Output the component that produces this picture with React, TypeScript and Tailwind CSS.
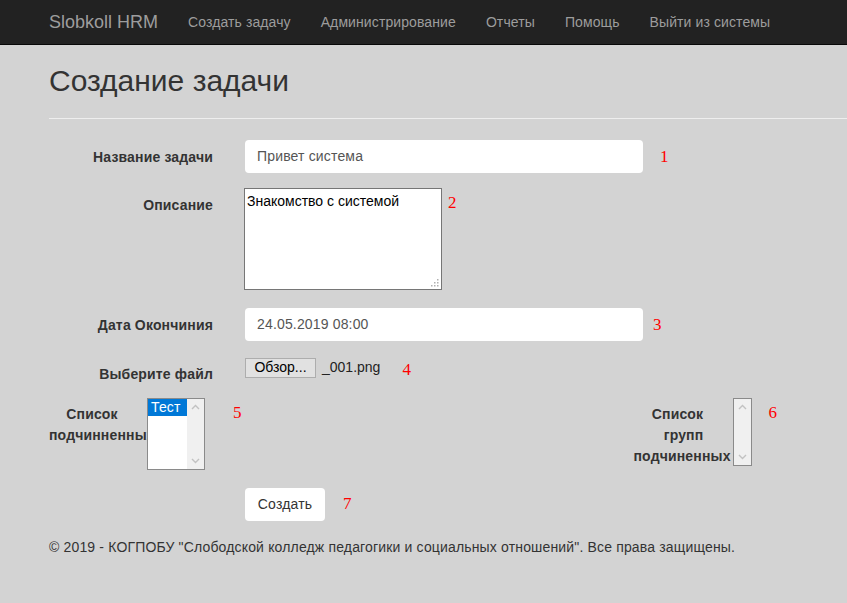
const Mark = ({ n, className = "" }: { n: string; className?: string }) => (
  <span className={"font-['Liberation_Serif',serif] text-[17px] leading-none tracking-normal text-[#ff0000] " + className}>
    {n}
  </span>
)

const Chevron = ({ up }: { up?: boolean }) => (
  <svg width="9" height="6" viewBox="0 0 9 6" className="block">
    <path
      d={up ? "M1 5 L4.5 1.5 L8 5" : "M1 1 L4.5 4.5 L8 1"}
      fill="none"
      stroke="#c2c2c2"
      strokeWidth="1.4"
    />
  </svg>
)

const ListBox = ({ items, w, h }: { items: string[]; w: string; h: string }) => (
  <div className={"relative flex shrink-0 border border-[#8a8a8a] bg-white " + w + " " + h}>
    <div className="flex-1 min-w-0">
      {items.map((it) => (
        <div key={it} className="bg-[#0078d7] text-white text-[14px] leading-[17px] pl-[3px]">
          {it}
        </div>
      ))}
    </div>
    <div className="w-[17px] bg-[#f0f0f0] flex flex-col items-center justify-between py-[5px]">
      <Chevron up />
      <Chevron />
    </div>
  </div>
)

const navLinks = ["Создать задачу", "Администрирование", "Отчеты", "Помощь", "Выйти из системы"]

export default function App() {
  return (
    <div className="min-h-[603px] bg-[#d3d3d3] font-['Liberation_Sans',Arial,sans-serif] text-[14px] tracking-[0.16px] text-[#333]">
      {/* Navbar */}
      <div className="h-[45px] bg-[#222] border-b border-[#080808] flex items-center pl-[49px]">
        <span className="text-[18px] tracking-normal text-[#9d9d9d] mr-[30px]">Slobkoll HRM</span>
        <div className="flex gap-[30px] tracking-[0.1px] text-[#9d9d9d]">
          {navLinks.map((l) => (
            <span key={l}>{l}</span>
          ))}
        </div>
      </div>

      <div className="pl-[49px]">
        <h2 className="text-[30px] leading-[33px] tracking-normal mt-[19px] text-[#333]">Создание задачи</h2>
        <div className="h-px bg-[#eeeeee] mt-[21px]" />

        <div className="pr-[49px]">
          {/* Title */}
          <div className="flex items-start mt-[21px]">
            <label className="w-[164px] shrink-0 text-right font-bold pt-[7px] leading-[20px]">Название задачи</label>
            <div className="ml-[32px] w-[398px] h-[33px] bg-white rounded-[4px] flex items-center px-[12px] text-[#555]">
              Привет система
            </div>
            <Mark n="1" className="ml-[17px] mt-[8px]" />
          </div>

          {/* Description */}
          <div className="flex items-start mt-[15px]">
            <label className="w-[164px] shrink-0 text-right font-bold pt-[7px] leading-[20px]">Описание</label>
            <div className="relative ml-[31px] w-[198px] h-[102px] bg-white border border-[#767676] text-black tracking-normal px-[2px] pt-[4px] leading-[17px]">
              Знакомство с системой
              <svg width="8" height="8" viewBox="0 0 8 8" className="absolute right-[2px] bottom-[2px]">
                <g fill="#b0b0b0">
                  <rect x="6" y="0" width="1.5" height="1.5" />
                  <rect x="3" y="3" width="1.5" height="1.5" />
                  <rect x="6" y="3" width="1.5" height="1.5" />
                  <rect x="0" y="6" width="1.5" height="1.5" />
                  <rect x="3" y="6" width="1.5" height="1.5" />
                  <rect x="6" y="6" width="1.5" height="1.5" />
                </g>
              </svg>
            </div>
            <Mark n="2" className="ml-[6px] mt-[6px]" />
          </div>

          {/* Date */}
          <div className="flex items-start mt-[18px]">
            <label className="w-[164px] shrink-0 text-right font-bold pt-[7px] leading-[20px]">Дата Окончиния</label>
            <div className="ml-[32px] w-[398px] h-[33px] bg-white rounded-[4px] flex items-center px-[12px] text-[#555]">
              24.05.2019 08:00
            </div>
            <Mark n="3" className="ml-[10px] mt-[8px]" />
          </div>

          {/* File */}
          <div className="flex items-start mt-[16px]">
            <label className="w-[164px] shrink-0 text-right font-bold pt-[7px] leading-[20px]">Выберите файл</label>
            <div className="ml-[32px] flex items-center gap-[6px] text-black tracking-normal">
              <span className="h-[20px] w-[71px] bg-[#e1e1e1] border border-[#adadad] flex items-center justify-center text-[14px]">
                Обзор...
              </span>
              <span className="text-[#222]">_001.png</span>
            </div>
            <Mark n="4" className="ml-[22px] mt-[4px]" />
          </div>

          {/* Lists */}
          <div className="flex items-start justify-between mt-[14px] pr-[21px]">
            <div className="flex items-start">
              <div className="w-[86px] shrink-0 text-center font-bold leading-[21px] pt-[6px] whitespace-nowrap overflow-visible">
                <div>Список</div>
                <div className="text-left">подчинненных:</div>
              </div>
              <div className="relative z-10 ml-[12px]">
                <ListBox items={["Тест"]} w="w-[58px]" h="h-[72px]" />
              </div>
              <Mark n="5" className="ml-[28px] mt-[6px]" />
            </div>
            <div className="flex items-start">
              <div className="w-[96px] text-center font-bold leading-[21px] pt-[6px] mr-[3px]">
                <div className="pr-[8px]">Список</div>
                <div className="pl-[4px]">групп</div>
                <div>подчиненных</div>
              </div>
              <ListBox items={[]} w="w-[19px]" h="h-[68px]" />
              <Mark n="6" className="ml-[17px] mt-[6px]" />
            </div>
          </div>

          {/* Submit */}
          <div className="flex items-center mt-[18px]">
            <div className="w-[164px] shrink-0" />
            <div className="ml-[32px] h-[33px] w-[80px] bg-white rounded-[4px] flex items-center justify-center text-[#333]">
              Создать
            </div>
            <Mark n="7" className="ml-[18px] -mt-[2px]" />
          </div>
        </div>

        <footer className="mt-[16px] leading-[20px] text-[#333]">
          © 2019 - КОГПОБУ "Слободской колледж педагогики и социальных отношений". Все права защищены.
        </footer>
      </div>
    </div>
  )
}
